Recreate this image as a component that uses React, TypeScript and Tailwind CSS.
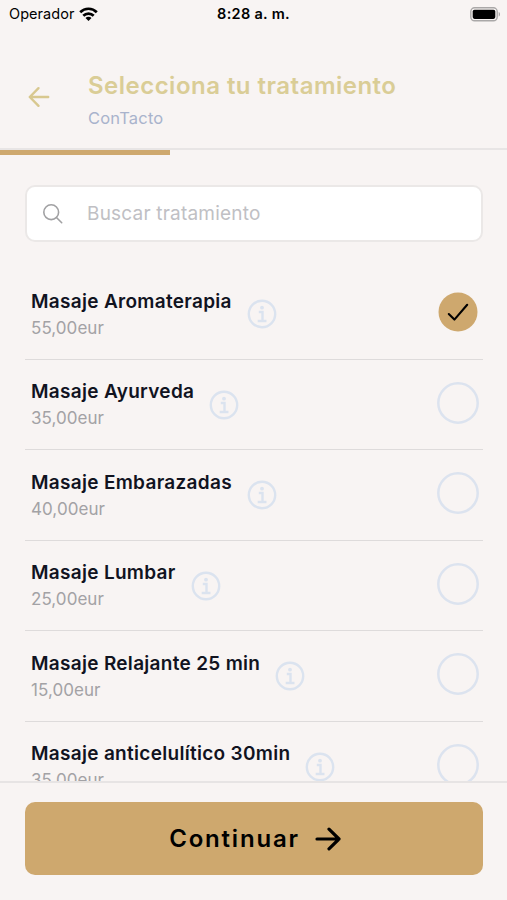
import { useState } from 'react'

const TREATMENTS = [
  { id: 1, name: 'Masaje Aromaterapia', price: '55,00eur' },
  { id: 2, name: 'Masaje Ayurveda', price: '35,00eur' },
  { id: 3, name: 'Masaje Embarazadas', price: '40,00eur' },
  { id: 4, name: 'Masaje Lumbar', price: '25,00eur' },
  { id: 5, name: 'Masaje Relajante 25 min', price: '15,00eur' },
  { id: 6, name: 'Masaje anticelulítico 30min', price: '35,00eur' },
]

function StatusBar() {
  return (
    <div className="grid h-7 shrink-0 grid-cols-3 items-center pr-[6px] pl-[9px] text-black">
      <div className="flex items-center gap-[5px] text-[14.5px] tracking-[0.05px]">
        Operador
        <svg width="19" height="15" viewBox="0 0 19 15" fill="none" stroke="currentColor" strokeWidth="2.7" aria-hidden>
          <path d="M1.2 5.2a11.7 11.7 0 0 1 16.6 0" />
          <path d="M4.3 8.7a7.4 7.4 0 0 1 10.4 0" />
          <path d="M9.5 14 6.5 11a4.2 4.2 0 0 1 6 0Z" fill="currentColor" stroke="none" />
        </svg>
      </div>
      <div className="-ml-[3px] text-center text-[14.5px] font-semibold tracking-[0.3px]">8:28 a. m.</div>
      <svg className="justify-self-end" width="31" height="15" viewBox="0 0 31 15" aria-hidden>
        <rect x="0.8" y="0.8" width="26.4" height="13" rx="3.8" fill="none" stroke="#aaa8a8" strokeWidth="1.4" />
        <rect x="2.7" y="2.7" width="22.6" height="9.2" rx="1.8" fill="#000" />
        <path d="M28.7 5v4.6c1.8-.7 1.8-3.9 0-4.6Z" fill="#aaa8a8" />
      </svg>
    </div>
  )
}

function Header() {
  return (
    <header className="flex h-[122px] shrink-0 items-start border-b-2 border-[#e8e5e5] pl-7">
      <button type="button" aria-label="Volver" className="mt-[58px] text-[#d8c88f]">
        <svg width="22" height="22" viewBox="0 0 22 22" fill="none" stroke="currentColor" strokeWidth="2.4" strokeLinecap="round" strokeLinejoin="round">
          <path d="M20.2 11H1.8M10.5 2.2 1.8 11l8.7 8.8" />
        </svg>
      </button>
      <div className="mt-[42px] ml-[38px]">
        <h1 className="text-[24px] leading-8 font-semibold tracking-[0.48px] whitespace-nowrap text-[#dacd96]">
          Selecciona tu tratamiento
        </h1>
        <p className="mt-[4px] text-[16.5px] leading-6 tracking-[0.2px] text-[#a9b3cc]">ConTacto</p>
      </div>
    </header>
  )
}

function InfoIcon() {
  return (
    <svg width="30" height="30" viewBox="0 0 30 30" fill="none" stroke="#dbe3ef" strokeWidth="2.4" aria-hidden>
      <circle cx="15" cy="15" r="13.2" />
      <path d="M11.8 13h3.7v8.7M10.7 22h8.8" />
      <circle cx="15" cy="8.7" r="1.9" fill="#dbe3ef" stroke="none" />
    </svg>
  )
}

function SelectMark({ selected }: { selected: boolean }) {
  return (
    <svg width="42" height="42" viewBox="0 0 42 42" fill="none" strokeLinecap="round" strokeLinejoin="round" aria-hidden>
      {selected ? (
        <>
          <circle cx="21" cy="21" r="19.5" fill="#cea86e" />
          <path d="m11.8 23 5.6 5.6L30.2 13.8" stroke="#000" strokeWidth="2.1" />
        </>
      ) : (
        <circle cx="21" cy="21" r="19.7" stroke="#dce3ef" strokeWidth="2.5" />
      )}
    </svg>
  )
}

export default function App() {
  const [selected, setSelected] = useState(1)
  const [query, setQuery] = useState('')

  const visible = TREATMENTS.filter((t) => t.name.toLowerCase().includes(query.toLowerCase()))

  return (
    <div className="flex h-[900px] w-[507px] flex-col overflow-hidden bg-[#f8f4f3] font-['Inter',sans-serif]">
      <StatusBar />
      <Header />
      <div className="h-[5px] w-[170px] shrink-0 bg-[#cea86e]" />

      <label className="mt-[30px] mr-[24px] ml-[25px] flex h-[57px] shrink-0 items-center rounded-[10px] border-2 border-[#ebe8e7] bg-white pl-[15px]">
        <svg width="22" height="22" viewBox="0 0 22 22" fill="none" stroke="#a1a1a3" strokeWidth="1.6" strokeLinecap="round" aria-hidden>
          <circle cx="9.2" cy="9.2" r="7.4" />
          <path d="m14.7 14.7 5 5" />
        </svg>
        <input
          value={query}
          onChange={(e) => setQuery(e.target.value)}
          placeholder="Buscar tratamiento"
          className="ml-[23px] flex-1 pt-px text-[19px] tracking-[0.2px] text-[#11131f] outline-none placeholder:text-[#c0c0c4]"
        />
      </label>

      <ul className="mt-[27px] mr-[24px] ml-[25px] min-h-0 flex-1 overflow-hidden">
        {visible.map((t) => (
          <li
            key={t.id}
            onClick={() => setSelected(t.id)}
            className="flex h-[90.5px] items-start border-b-[1.5px] border-[#dedbdb] pl-[6px]"
          >
            <div className="mt-[18.5px]">
              <h2 className="text-[19px] leading-7 font-semibold tracking-[0.3px] whitespace-nowrap text-[#11131f]">
                {t.name}
              </h2>
              <p className="text-[17px] leading-[25px] tracking-[0.05px] text-[#a3a2a5]">{t.price}</p>
            </div>
            <button type="button" aria-label="Información" className="mt-[30px] ml-[15px]">
              <InfoIcon />
            </button>
            <div className="mr-[4px] ml-auto flex h-[86px] items-center">
              <SelectMark selected={t.id === selected} />
            </div>
          </li>
        ))}
      </ul>

      <footer className="h-[119px] shrink-0 border-t-2 border-[#e7e4e4] pt-[19px] pr-[24px] pl-[25px]">
        <button
          type="button"
          className="flex h-[73px] w-full items-center justify-center gap-[15px] rounded-[10px] bg-[#cea86e] pl-[2px] text-[24px] font-semibold tracking-[1.8px] text-black"
        >
          Continuar
          <svg width="26" height="24" viewBox="0 0 26 24" fill="none" stroke="currentColor" strokeWidth="3.2" strokeLinecap="round" strokeLinejoin="round">
            <path d="M2 12h22M14 2.2 24 12l-10 9.8" />
          </svg>
        </button>
      </footer>
    </div>
  )
}
